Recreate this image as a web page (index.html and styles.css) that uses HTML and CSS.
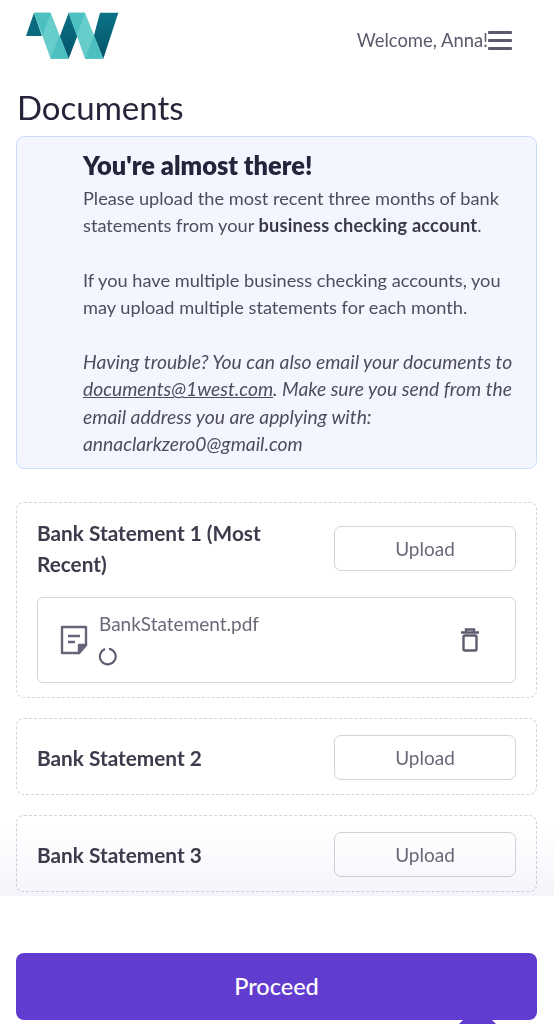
FILE: index.html
```html
<!DOCTYPE html>
<html lang="en">
<head>
    <meta charset="UTF-8">
    <meta name="viewport" content="width=device-width, initial-scale=1.0">
    <title>Documents</title>
    <link rel="stylesheet" href="styles.css">
</head>
<body>
    <div class="content">
        <header class="header">
            <svg class="logo" viewBox="0 0 315 180" width="105" height="60">
                <defs>
                    <linearGradient id="dark" x1="0" y1="0" x2="0" y2="1">
                        <stop offset="0" stop-color="#0d7286"/>
                        <stop offset="1" stop-color="#04546a"/>
                    </linearGradient>
                </defs>
                <polygon points="18,90 42,20 66,90" fill="#0b6b7e"/>
                <polygon points="118,95 146,20 172,90 146,158" fill="url(#dark)"/>
                <polygon points="220,95 240,20 295,20 250,158" fill="url(#dark)"/>
                <polygon points="42,20 92,20 146,158 92,158" fill="#67cdca"/>
                <polygon points="42,20 92,20 68,88" fill="#4cbfc0"/>
                <polygon points="92,158 119,88 146,158" fill="#4cbfc0"/>
                <polygon points="146,20 195,20 250,158 195,158" fill="#67cdca"/>
                <polygon points="146,20 195,20 171,88" fill="#4cbfc0"/>
                <polygon points="195,158 222,90 250,158" fill="#4cbfc0"/>
            </svg>
            <div class="welcome">
                <span>Welcome, Anna!</span>
                <div class="burger"><i></i><i></i><i></i></div>
            </div>
        </header>

        <h1 class="title">Documents</h1>

        <section class="notice">
            <h2>You're almost there!</h2>
            <p>Please upload the most recent three months of bank statements from your <b>business checking account</b>.</p>
            <p>If you have multiple business checking accounts, you may upload multiple statements for each month.</p>
            <p class="tip">Having trouble? You can also email your documents to <u>documents@1west.com</u>. Make sure you send from the email address you are applying with: annaclarkzero0@gmail.com</p>
        </section>

        <section class="card">
            <div class="card-row">
                <div class="card-title">Bank Statement 1 (Most Recent)</div>
                <button class="upload">Upload</button>
            </div>
            <div class="file">
                <svg class="file-icon" viewBox="0 0 28 30" width="28" height="30" fill="none" stroke="#67647a" stroke-width="2.4">
                    <path d="M2 2H26V20L19 28H2Z" stroke-linejoin="round"/>
                    <path d="M19 28V20H26Z" fill="#67647a" stroke-linejoin="round"/>
                    <path d="M8 11H20M8 17H15"/>
                </svg>
                <div class="file-info">
                    <div class="file-name">BankStatement.pdf</div>
                    <svg class="spinner" viewBox="0 0 20 20" width="19" height="19" fill="none" stroke="#5f5c70" stroke-width="2.2">
                        <path d="M7.5 2.2A8.3 8.3 0 1 0 11.5 1.8"/>
                    </svg>
                </div>
                <svg class="trash" viewBox="0 0 18 24" width="18" height="24" fill="none" stroke="#5f5c70" stroke-width="2.4">
                    <path d="M0 4.5H18M5 4.5V1.5H13V4.5"/>
                    <rect x="2.5" y="7.5" width="13" height="15" rx="1.5"/>
                </svg>
            </div>
        </section>

        <section class="card">
            <div class="card-row">
                <div class="card-title">Bank Statement 2</div>
                <button class="upload">Upload</button>
            </div>
        </section>

        <section class="card">
            <div class="card-row">
                <div class="card-title">Bank Statement 3</div>
                <button class="upload">Upload</button>
            </div>
        </section>
        <div class="fade"></div>
    </div>

    <footer class="footer">
        <button class="proceed">Proceed</button>
        <div class="notch"></div>
    </footer>
</body>
</html>
```

FILE: styles.css
```css
html, body {
    margin: 0;
    padding: 0;
    height: 1024px;
    overflow: hidden;
}
body {
    font-family: Lato, "Noto Sans", sans-serif;
    background-color: #fff;
    color: #4f4c5e;
}
.content {
    position: relative;
    height: 896px;
    overflow: hidden;
    padding: 0 17px 0 16px;
    box-sizing: border-box;
}
.header {
    display: flex;
    justify-content: space-between;
    align-items: flex-start;
    padding: 6px 25px 0 4px;
    height: 88px;
    box-sizing: border-box;
}
.logo {
    display: block;
}
.welcome {
    display: flex;
    align-items: center;
    margin-top: 23px;
    font-size: 18.4px;
    color: #5c596c;
}
.burger {
    display: flex;
    flex-direction: column;
    gap: 5px;
    width: 24px;
    margin-top: 1px;
}
.burger i {
    display: block;
    height: 3px;
    background: #5c596c;
    border-radius: 1px;
}
.title {
    margin: 0 0 10px;
    font-size: 33px;
    line-height: 38px;
    font-weight: 400;
    color: #26243a;
    padding-left: 1px;
}
.notice {
    height: 333px;
    box-sizing: border-box;
    margin-bottom: 33px;
    padding: 12px 16px 0 66px;
    background: #f3f6fe;
    border: 1.5px solid #cdddf8;
    border-radius: 8px;
    font-size: 18.2px;
    line-height: 27.2px;
}
.notice h2 {
    margin: 0 0 4px;
    font-size: 25.4px;
    line-height: 32px;
    font-weight: 800;
    color: #26243a;
}
.notice p {
    margin: 0 0 27.2px;
}
.notice b {
    color: #3a3849;
    letter-spacing: 0.2px;
}
.notice .tip {
    font-size: 19.3px;
    font-style: italic;
}
.card {
    border: 1.5px dashed #d4d3dc;
    border-radius: 8px;
    padding: 14px 20px 13px;
    margin-bottom: 20px;
    background: #fff;
}
.card-row {
    display: flex;
    justify-content: space-between;
    align-items: center;
    min-height: 48px;
}
.card-title {
    width: 270px;
    font-size: 20.8px;
    line-height: 31px;
    font-weight: 700;
    color: #3d3b4b;
}
.upload {
    flex: none;
    width: 182px;
    height: 45px;
    background: #fff;
    border: 1.5px solid #d4d3dc;
    border-radius: 7px;
    font-family: inherit;
    font-size: 19px;
    color: #6b6878;
}
.file {
    display: flex;
    align-items: center;
    height: 86px;
    box-sizing: border-box;
    margin-top: 18px;
    margin-bottom: 1px;
    padding: 0 36px 0 22px;
    border: 1.5px solid #d4d3dc;
    border-radius: 6px;
}
.file-icon {
    flex: none;
}
.file-info {
    flex: 1;
    margin-left: 11px;
    margin-top: -3px;
}
.file-name {
    font-size: 19px;
    line-height: 24px;
    color: #6b6878;
    margin-bottom: 11px;
}
.spinner {
    display: block;
    margin-left: -1px;
}
.trash {
    flex: none;
}
.fade {
    position: absolute;
    left: 0;
    right: 0;
    bottom: 0;
    height: 70px;
    background: linear-gradient(#fff, #f6f4fb);
    mix-blend-mode: multiply;
    pointer-events: none;
}
.footer {
    position: relative;
    height: 128px;
    box-sizing: border-box;
    padding: 57px 17px 0 16px;
}
.proceed {
    display: block;
    width: 100%;
    height: 67px;
    padding-bottom: 3px;
    border: none;
    border-radius: 8px;
    background: #623cce;
    color: #fff;
    font-family: inherit;
    font-size: 23.5px;
    font-weight: 500;
}
.notch {
    position: absolute;
    left: 459px;
    top: 124px;
    width: 37px;
    height: 4px;
    background: #623cce;
    clip-path: polygon(4px 0, 33px 0, 37px 4px, 0 4px);
}
```
